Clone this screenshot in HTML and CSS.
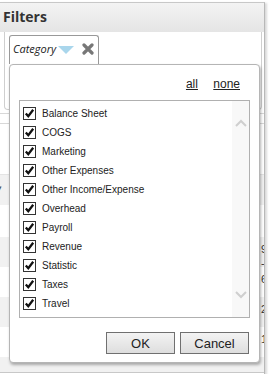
FILE: index.html
```html
<!DOCTYPE html>
<html lang="en">
<head>
    <meta charset="UTF-8">
    <meta name="viewport" content="width=device-width, initial-scale=1.0">
    <title>Filters</title>
    <link rel="stylesheet" href="styles.css">
</head>
<body>
    <div class="panel">
        <div class="panel-head">Filters</div>
        <div class="filter-area">
            <div class="chip">
                <span class="chip-label">Category</span>
                <svg class="chip-arrow" width="16" height="8" viewBox="0 0 16 8"><polygon points="0,0 16,0 8,8" fill="#a9d6ec"/></svg>
                <svg class="chip-close" width="12" height="12" viewBox="0 0 12 12"><path d="M2 2 L10 10 M10 2 L2 10" stroke="#777" stroke-width="3.2" stroke-linecap="round"/></svg>
            </div>
        </div>
        <div class="grid">
            <div class="grid-gap"></div>
            <div class="grid-head"></div>
            <div class="grid-top"></div>
            <div class="row alt"><span class="sort">&#9662;</span></div>
            <div class="row tall"></div>
            <div class="row alt"><span class="num">9<br>-</span></div>
            <div class="row"><span class="num">6</span></div>
            <div class="row alt"><span class="num">2</span></div>
            <div class="row"><span class="num">1</span></div>
            <div class="row alt short"></div>
        </div>
    </div>

    <div class="popup">
        <div class="links">
            <a href="#">all</a>
            <a href="#">none</a>
        </div>
        <div class="list">
            <div class="items" id="items"></div>
            <div class="track">
                <svg width="12" height="8" viewBox="0 0 12 8"><path d="M1 7 L6 2 L11 7" fill="none" stroke="#cfcfcf" stroke-width="2"/></svg>
                <svg width="12" height="8" viewBox="0 0 12 8"><path d="M1 1 L6 6 L11 1" fill="none" stroke="#cfcfcf" stroke-width="2"/></svg>
            </div>
        </div>
        <div class="buttons">
            <button class="btn">OK</button>
            <button class="btn">Cancel</button>
        </div>
    </div>

    <script>
        const categories = ['Balance Sheet', 'COGS', 'Marketing', 'Other Expenses', 'Other Income/Expense',
            'Overhead', 'Payroll', 'Revenue', 'Statistic', 'Taxes', 'Travel'];
        const box = document.getElementById('items');
        categories.forEach(name => {
            const item = document.createElement('div');
            item.className = 'item';
            item.innerHTML = `<svg class="check" width="13" height="13" viewBox="0 0 13 13">
                <rect x="0.5" y="0.5" width="12" height="12" fill="#fff" stroke="#333"/>
                <path d="M2.8 6.4 L5.3 9.2 L10.2 2.8" fill="none" stroke="#111" stroke-width="2.3"/>
            </svg><span>${name}</span>`;
            box.appendChild(item);
        });
    </script>
</body>
</html>
```

FILE: styles.css
```css
body {
    margin: 0;
    font-family: 'Liberation Sans', Arial, sans-serif;
    color: #222;
    background-color: white;
}
.panel {
    margin-top: 2px;
    width: 264px;
    height: 371px;
    border-top: 1px solid #c8c8c8;
    border-right: 1px solid #b8b8b8;
    box-shadow: 2px 1px 2px rgba(0, 0, 0, 0.15);
    overflow: hidden;
}
.panel-head {
    height: 29px;
    line-height: 28px;
    padding-left: 3px;
    font-family: 'Open Sans', sans-serif;
    font-weight: 700;
    font-size: 14px;
    color: #333;
    background: linear-gradient(#f3f3f3, #e5e5e5);
}
.filter-area {
    margin-left: 4px;
    width: 258px;
    height: 77px;
    border: 1px solid #cfcfcf;
    border-top: none;
    border-radius: 0 0 4px 4px;
    padding: 3px 0 0 4px;
    box-sizing: border-box;
    height: 78px;
}
.chip {
    width: 90px;
    height: 29px;
    box-sizing: border-box;
    border: 1px solid #999;
    border-bottom: none;
    border-radius: 3px 3px 0 0;
    display: flex;
    align-items: flex-start;
    padding: 6px 0 0 3px;
}
.chip-label {
    font-family: 'Open Sans', sans-serif;
    font-style: italic;
    font-size: 11px;
    line-height: 14px;
    color: #222;
}
.chip-arrow {
    margin: 4px 0 0 2px;
}
.chip-close {
    margin: 1px 0 0 8px;
}
.grid-gap {
    height: 3px;
}
.grid-head {
    height: 9px;
    border-top: 1px solid #d8d8d8;
    border-bottom: 1px solid #d8d8d8;
}
.grid-top {
    height: 50px;
    border-bottom: 1px solid #e4e4e4;
}
.row {
    height: 30px;
    position: relative;
    font-size: 11px;
    color: #333;
}
.row.tall {
    height: 32px;
}
.row.short {
    height: 15px;
    border-bottom: 1px solid #c8c8c8;
}
.alt {
    background-color: #f1f1f1;
}
.sort {
    display: block;
    padding-top: 8px;
    margin-left: -3px;
    font-size: 9px;
    color: #555;
}
.num {
    display: block;
    padding: 5px 0 0 261px;
    line-height: 14px;
    white-space: nowrap;
}
.popup {
    position: absolute;
    left: 9px;
    top: 64px;
    width: 251px;
    height: 299px;
    box-sizing: border-box;
    background-color: white;
    border: 1px solid #b5b5b5;
    border-radius: 4px;
    box-shadow: 1px 2px 3px rgba(0, 0, 0, 0.3);
    padding: 0 9px;
}
.links {
    height: 35px;
    box-sizing: border-box;
    padding: 12px 10px 0 0;
    text-align: right;
    font-size: 12px;
    line-height: 14px;
}
.links a {
    color: #222;
    margin-left: 12px;
}
.list {
    height: 218px;
    box-sizing: border-box;
    border: 1px solid #b0b0b0;
    display: flex;
}
.items {
    flex: 1;
    padding-top: 3px;
}
.item {
    height: 19px;
    display: flex;
    align-items: center;
    padding-left: 3px;
    font-size: 10px;
}
.check {
    margin-right: 6px;
}
.track {
    width: 17px;
    background-color: #f8f8f8;
    display: flex;
    flex-direction: column;
    align-items: center;
    justify-content: space-between;
    padding: 18px 0 18px;
}
.buttons {
    display: flex;
    justify-content: flex-end;
    gap: 5px;
    margin-top: 14px;
    padding-right: 1px;
}
.btn {
    width: 69px;
    height: 22px;
    border: 1px solid #707070;
    border-radius: 0;
    background: linear-gradient(#f3f3f3, #dedede);
    font-family: 'Liberation Sans', Arial, sans-serif;
    font-size: 13px;
    color: #222;
    padding: 0;
}
```
